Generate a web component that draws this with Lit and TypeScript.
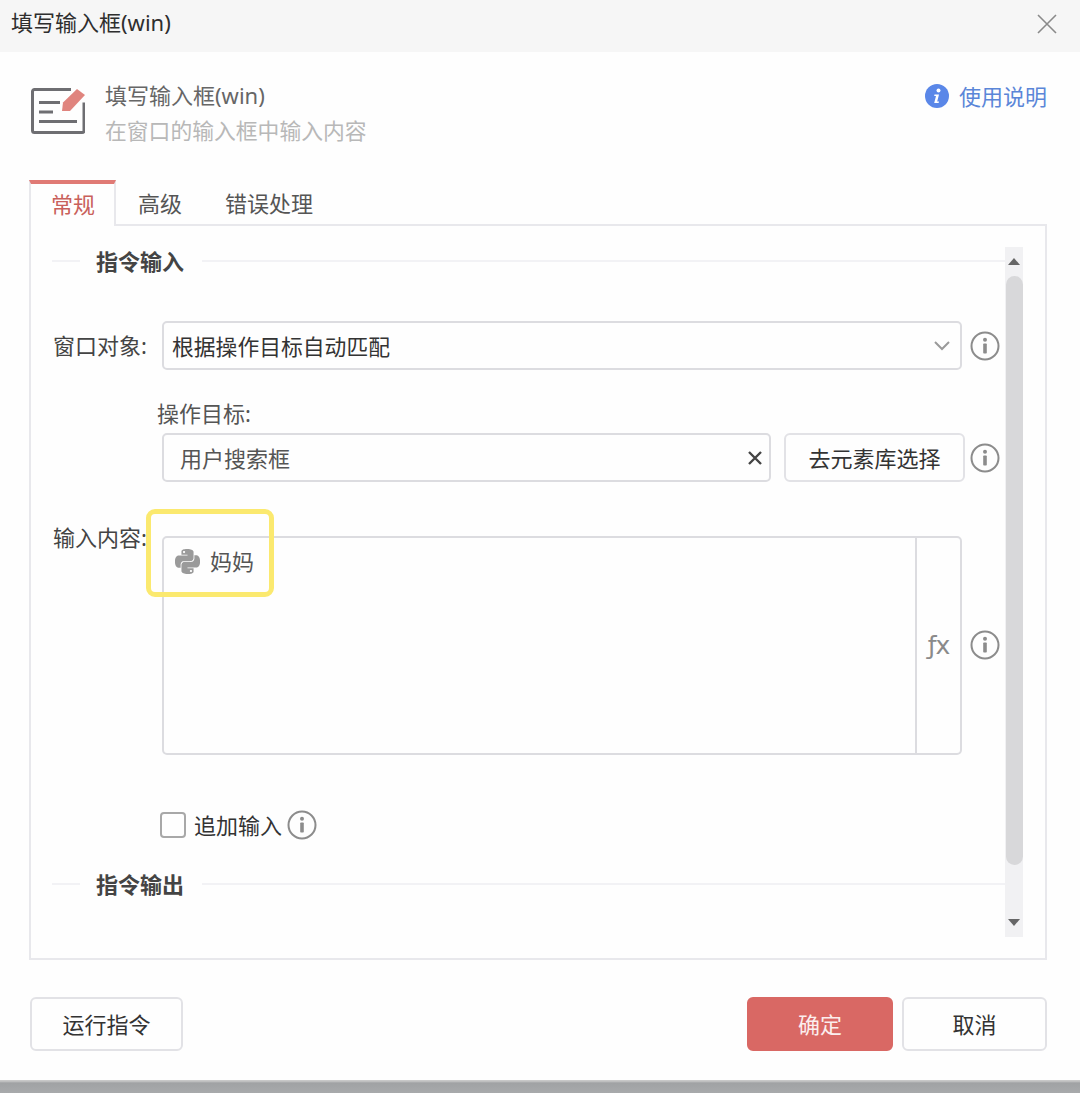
import { LitElement, html, css, svg } from "lit";
import { customElement } from "lit/decorators.js";

const info = () => html`<svg class="info" viewBox="0 0 30 30" width="30" height="30">
  <circle cx="15" cy="15" r="13.5" fill="none" stroke="#8c8c8c" stroke-width="2"></circle>
  <circle cx="15" cy="8.8" r="2" fill="#8c8c8c"></circle>
  <rect x="13.2" y="12.5" width="3.6" height="10" rx="0.8" fill="#8c8c8c"></rect>
</svg>`;

const python = svg`<path d="M14.25.18l.9.2.73.26.59.3.45.32.34.34.25.34.16.33.1.3.04.26.02.2-.01.13V8.5l-.05.63-.13.55-.21.46-.26.38-.3.31-.33.25-.35.19-.35.14-.33.1-.3.07-.26.04-.21.02H8.77l-.69.05-.59.14-.5.22-.41.27-.33.32-.27.35-.2.36-.15.37-.1.35-.07.32-.04.27-.02.21v3.06H3.17l-.21-.03-.28-.07-.32-.12-.35-.18-.36-.26-.36-.36-.35-.46-.32-.59-.28-.73-.21-.88-.14-1.05-.05-1.23.06-1.22.16-1.04.24-.87.32-.71.36-.57.4-.44.42-.33.42-.24.4-.16.36-.1.32-.05.24-.01h.16l.06.01h8.16v-.83H6.18l-.01-2.75-.02-.37.05-.34.11-.31.17-.28.25-.26.31-.23.38-.2.44-.18.51-.15.58-.12.64-.1.71-.06.77-.04.84-.02 1.27.05zm-6.3 1.98l-.23.33-.08.41.08.41.23.34.33.22.41.09.41-.09.33-.22.23-.34.08-.41-.08-.41-.23-.33-.33-.22-.41-.09-.41.09zm13.09 3.95l.28.06.32.12.35.18.36.27.36.35.35.47.32.59.28.73.21.88.14 1.04.05 1.23-.06 1.23-.16 1.04-.24.86-.32.71-.36.57-.4.45-.42.33-.42.24-.4.16-.36.09-.32.05-.24.02-.16-.01h-8.22v.82h5.84l.01 2.76.02.36-.05.34-.11.31-.17.29-.25.25-.31.24-.38.2-.44.17-.51.15-.58.13-.64.09-.71.07-.77.04-.84.01-1.27-.04-1.07-.14-.9-.2-.73-.25-.59-.3-.45-.33-.34-.34-.25-.34-.16-.33-.1-.3-.04-.25-.02-.2.01-.13v-5.34l.05-.64.13-.54.21-.46.26-.38.3-.32.33-.24.35-.2.35-.14.33-.1.3-.06.26-.04.21-.02.13-.01h5.84l.69-.05.59-.14.5-.21.41-.28.33-.32.27-.35.2-.36.15-.36.1-.35.07-.32.04-.28.02-.21V6.07h2.09l.14.01zm-6.47 14.25l-.23.33-.08.41.08.41.23.33.33.23.41.08.41-.08.33-.23.23-.33.08-.41-.08-.41-.23-.33-.33-.23-.41-.08-.41.08z"></path>`;

@customElement("app-root")
export class AppRoot extends LitElement {
  static styles = css`
    :host {
      display: flex;
      flex-direction: column;
      width: 1080px;
      height: 1093px;
      overflow: hidden;
      background: #fefefe;
      color: #333;
      font: 22px/30px "Noto Sans", "Noto Sans CJK SC", sans-serif;
    }
    .titlebar {
      flex: 0 0 52px;
      display: flex;
      align-items: center;
      justify-content: space-between;
      padding: 0 22px 8px 11px;
      box-sizing: border-box;
      background: #f6f6f6;
      color: #2e2e2e;
    }
    .titlebar svg { margin-top: 4px; margin-right: 1px; }
    .head {
      flex: 0 0 128px;
      box-sizing: border-box;
      display: flex;
      padding: 28px 33px 0 31px;
    }
    .doc { margin: 8px 20px 0 0; flex: none; }
    .head-text { flex: 1; }
    .head-title { color: #666; height: 30px; }
    .head-sub { color: #b8b8b8; margin-top: 6px; font-size: 21.8px; }
    .usage { display: flex; align-items: flex-start; gap: 10px; color: #5b86d8; }
    .usage span { margin-top: 1px; }
    .usage svg { margin-top: 4px; }
    .tabs { flex: 0 0 44px; min-height: 0; height: 44px; display: flex; padding-left: 29px; position: relative; z-index: 1; }
    .tab { padding: 8px 22px 0; box-sizing: border-box; color: #555; white-space: nowrap; }
    .tab:last-child { margin-left: -1px; }
    .tab.active {
      width: 87px;
      height: 46px;
      margin-bottom: -2px;
      border-top: 4px solid #e07a75;
      border-left: 2px solid #e8e8ec;
      border-right: 2px solid #e8e8ec;
      background: #fefefe;
      padding: 5px 0 0 20px;
      color: #c9605b;
    }
    .panel {
      flex: 0 0 736px;
      box-sizing: border-box;
      margin: 0 33px 0 29px;
      border: 2px solid #e8e8ec;
      padding: 21px 22px 21px 21px;
      display: flex;
    }
    .body { flex: 1; min-width: 0; overflow: hidden; }
    .section { display: flex; align-items: center; height: 28px; font-weight: 700; color: #444; }
    .section::before, .section::after { content: ""; height: 2px; background: #f2f2f5; }
    .section::before { flex: 0 0 28px; margin-right: 16px; }
    .section::after { flex: 1; margin-left: 18px; }
    .row { display: flex; align-items: center; }
    .label { flex: 0 0 110px; padding-left: 1px; box-sizing: border-box; color: #444; }
    .row.window { margin-top: 46px; height: 49px; }
    .row.window .label { margin-top: -2px; }
    .select {
      width: 800px;
      height: 49px;
      box-sizing: border-box;
      border: 2px solid #dcdce0;
      border-radius: 5px;
      display: flex;
      align-items: center;
      justify-content: space-between;
      padding: 0 10px 0 8px;
      color: #333;
      font-size: 21.8px;
    }
    .select span { margin-top: 2px; }
    .row .info { margin-left: 8px; flex: none; }
    .target-label { margin: 29px 0 0 105px; height: 30px; line-height: 28px; color: #555; }
    .row.target { margin: 4px 0 0 110px; height: 49px; }
    .input {
      width: 609px;
      height: 49px;
      box-sizing: border-box;
      border: 2px solid #dcdce0;
      border-radius: 5px;
      display: flex;
      align-items: center;
      justify-content: space-between;
      padding: 0 7px 0 16px;
      color: #555;
    }
    .btn {
      box-sizing: border-box;
      border: 2px solid #e2e2e6;
      border-radius: 6px;
      background: #fefefe;
      display: flex;
      align-items: center;
      justify-content: center;
      color: #333;
    }
    .row.target .btn { width: 181px; height: 49px; margin-left: 13px; }
    .row.target .info { margin-left: 5px; }
    .row.content { margin-top: 54px; height: 219px; align-items: flex-start; }
    .row.content .label { margin-top: -14px; line-height: 30px; }
    .area {
      position: relative;
      width: 800px;
      height: 219px;
      box-sizing: border-box;
      border: 2px solid #dcdce0;
      border-radius: 5px;
      display: flex;
    }
    .area-main { flex: 1; display: flex; align-items: flex-start; gap: 10px; padding: 8px 0 0 11px; color: #555; }
    .area-main svg { margin-top: 3px; fill: #9a9a9a; }
    .fx {
      flex: 0 0 45px;
      box-sizing: border-box;
      border-left: 2px solid #dcdce0;
      display: flex;
      align-items: center;
      justify-content: center;
      font: 400 25px/30px "DejaVu Sans", sans-serif;
      letter-spacing: -1px;
      color: #8a8a8a;
    }
    .mark {
      position: absolute;
      left: -18px;
      top: -29px;
      width: 128px;
      height: 88px;
      box-sizing: border-box;
      border: 5px solid #fbe96f;
      border-radius: 9px;
      pointer-events: none;
    }
    .row.content .info { margin-top: 94px; }
    .row.append { margin: 55px 0 0 108px; height: 30px; }
    .check {
      width: 26px;
      height: 26px;
      box-sizing: border-box;
      border: 2px solid #a8a8a8;
      border-radius: 4px;
      margin-right: 8px;
    }
    .row.append .info { margin-left: 5px; }
    .section.out { margin-top: 30px; }
    .scrollbar {
      flex: 0 0 18px;
      background: #f1f1f3;
      display: flex;
      flex-direction: column;
      align-items: center;
    }
    .arrow { flex: 0 0 29px; display: flex; align-items: center; justify-content: center; }
    .thumb { flex: 0 0 589px; align-self: stretch; margin-left: 1px; border-radius: 9px; background: #d8d8da; }
    .spacer { flex: 1; }
    .footer { flex: 0 0 54px; display: flex; margin: 37px 33px 0 30px; }
    .footer .btn { height: 54px; }
    .run { width: 153px; }
    .ok {
      width: 146px;
      margin-left: auto;
      background: #d96864 !important;
      border-color: #d96864 !important;
      color: #fbeeee !important;
    }
    .cancel { width: 145px; margin-left: 9px; }
    .bottom {
      margin-top: 29px;
      flex: 0 0 13px;
      background: linear-gradient(#c8c8c8 0, #c8c8c8 1px, #a0a2a4 3px, #a8aaac 100%);
    }
  `;

  render() {
    return html`
      <div class="titlebar">
        <span>填写输入框(win)</span>
        <svg width="20" height="20" viewBox="0 0 20 20" fill="none" stroke="#8a8a8a" stroke-width="1.6">
          <path d="M1 1L19 19M19 1L1 19"></path>
        </svg>
      </div>
      <div class="head">
        <svg class="doc" width="54" height="46" viewBox="0 0 54 46" fill="none">
          <path d="M40 1.5H3.5a2 2 0 0 0-2 2V42.500a2 2 0 0 0 2 2H51a2 2 0 0 0 2-2V14.500" stroke="#6e6e72" stroke-width="3"></path>
          <path d="M8 14.500H29M8 24H22M8 33.500H46" stroke="#6e6e72" stroke-width="3"></path>
          <path d="M31 23L32 14.500L46 1L54 7L39 23Z" fill="#e0847e"></path>
        </svg>
        <div class="head-text">
          <div class="head-title">填写输入框(win)</div>
          <div class="head-sub">在窗口的输入框中输入内容</div>
        </div>
        <div class="usage">
          <svg width="24" height="24" viewBox="0 0 24 24">
            <circle cx="12" cy="12" r="12" fill="#5a87e8"></circle>
            <circle cx="13.500" cy="6.500" r="2" fill="#fff"></circle>
            <path d="M9.500 10.500H14L12.200 17.500H14L13.600 19H9.200L11 12H9.200Z" fill="#fff"></path>
          </svg>
          <span>使用说明</span>
        </div>
      </div>
      <div class="tabs">
        <div class="tab active">常规</div>
        <div class="tab">高级</div>
        <div class="tab">错误处理</div>
      </div>
      <div class="panel">
        <div class="body">
          <div class="section">指令输入</div>
          <div class="row window">
            <div class="label">窗口对象:</div>
            <div class="select">
              <span>根据操作目标自动匹配</span>
              <svg width="16" height="10" viewBox="0 0 16 10" fill="none" stroke="#9a9a9a" stroke-width="2">
                <path d="M1 1L8 8L15 1"></path>
              </svg>
            </div>
            ${info()}
          </div>
          <div class="target-label">操作目标:</div>
          <div class="row target">
            <div class="input">
              <span>用户搜索框</span>
              <svg width="14" height="14" viewBox="0 0 14 14" fill="none" stroke="#444" stroke-width="2.400">
                <path d="M1 1L13 13M13 1L1 13"></path>
              </svg>
            </div>
            <div class="btn">去元素库选择</div>
            ${info()}
          </div>
          <div class="row content">
            <div class="label">输入内容:</div>
            <div class="area">
              <div class="area-main">
                <svg width="25" height="25" viewBox="0 0 24 24">${python}</svg>
                <span>妈妈</span>
              </div>
              <div class="fx">ƒx</div>
              <div class="mark"></div>
            </div>
            ${info()}
          </div>
          <div class="row append">
            <div class="check"></div>
            <span>追加输入</span>
            ${info()}
          </div>
          <div class="section out">指令输出</div>
        </div>
        <div class="scrollbar">
          <div class="arrow">
            <svg width="12" height="7" viewBox="0 0 12 7"><path d="M6 0L12 7H0Z" fill="#666"></path></svg>
          </div>
          <div class="thumb"></div>
          <div class="spacer"></div>
          <div class="arrow">
            <svg width="12" height="7" viewBox="0 0 12 7"><path d="M0 0H12L6 7Z" fill="#666"></path></svg>
          </div>
        </div>
      </div>
      <div class="footer">
        <div class="btn run">运行指令</div>
        <div class="btn ok">确定</div>
        <div class="btn cancel">取消</div>
      </div>
      <div class="bottom"></div>
    `;
  }
}
